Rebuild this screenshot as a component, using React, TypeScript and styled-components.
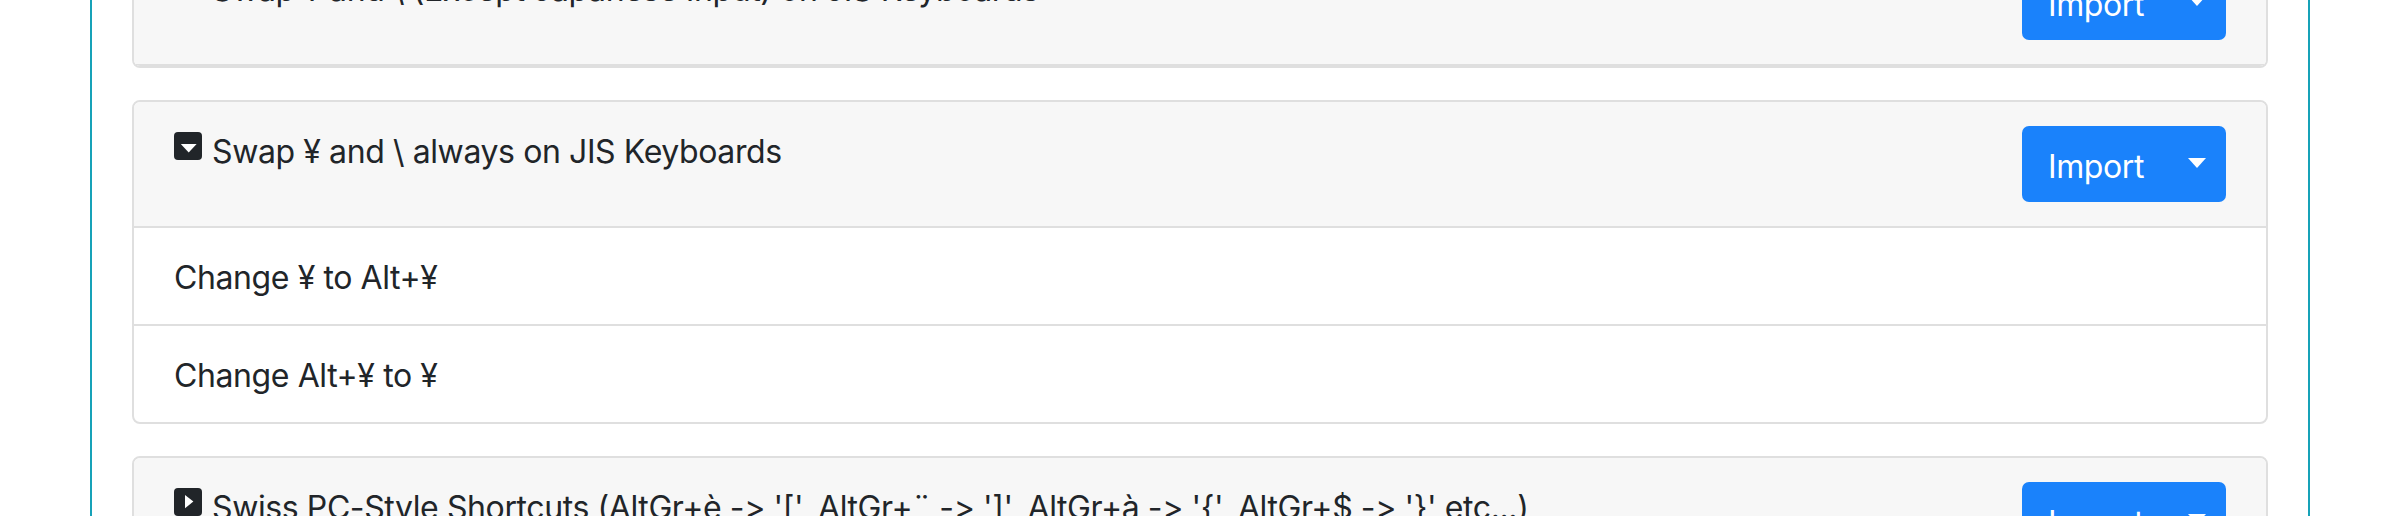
import React from 'react';
import styled, { createGlobalStyle } from 'styled-components';

interface Rule {
  title: string;
  expanded: boolean;
  items: string[];
}

const rules: Rule[] = [
  {
    title: 'Swap ¥ and \\ (Except Japanese Input) on JIS Keyboards',
    expanded: false,
    items: [],
  },
  {
    title: 'Swap ¥ and \\ always on JIS Keyboards',
    expanded: true,
    items: ['Change ¥ to Alt+¥', 'Change Alt+¥ to ¥'],
  },
  {
    title:
      "Swiss PC-Style Shortcuts (AltGr+è -> '[', AltGr+¨ -> ']', AltGr+à -> '{', AltGr+$ -> '}' etc...)",
    expanded: false,
    items: [],
  },
];

const GlobalStyle = createGlobalStyle`
  body {
    margin: 0;
    background: #fff;
    color: #212529;
    font-family: Inter, "Liberation Sans", sans-serif;
    overflow: hidden;
  }
`;

const Page = styled.div`
  padding: 0 80px 0 90px;
`;

// page is scrolled: the first card is cut off at the top
const Container = styled.div`
  margin-top: -62px;
  padding: 0 40px;
  border-left: 2px solid #17a2b8;
  border-right: 2px solid #17a2b8;
`;

const Card = styled.div`
  margin-bottom: 32px;
  background: #fff;
  border: 2px solid #dfdfdf;
  border-radius: 8px;
  overflow: hidden;
`;

const CardHeader = styled.div`
  display: flex;
  justify-content: space-between;
  align-items: flex-start;
  padding: 24px 40px;
  background: #f7f7f7;
  border-bottom: 2px solid #dfdfdf;
`;

const Title = styled.div`
  display: flex;
  align-items: flex-start;
  gap: 10px;
  font-size: 32px;
  line-height: 48px;
  letter-spacing: -0.4px;
`;

const TitleText = styled.span`
  padding-top: 2px;
`;

const ToggleIcon = styled.svg`
  flex-shrink: 0;
  width: 28px;
  height: 28px;
  margin-top: 6px;
`;

const ImportButton = styled.button`
  flex-shrink: 0;
  display: flex;
  align-items: center;
  justify-content: space-between;
  width: 204px;
  height: 76px;
  padding: 4px 20px 0 26px;
  border: none;
  border-radius: 7px;
  background: #1a82fb;
  color: #fff;
  font-family: inherit;
  font-size: 32px;
  letter-spacing: -0.4px;
`;

const Caret = styled.span`
  width: 0;
  height: 0;
  margin-top: -6px;
  border-top: 10px solid #fff;
  border-left: 9.6px solid transparent;
  border-right: 9.6px solid transparent;
`;

const Item = styled.div`
  padding: 26px 40px 22px;
  font-size: 32px;
  line-height: 48px;
  letter-spacing: -0.4px;

  & + & {
    border-top: 2px solid #dfdfdf;
  }
`;

const Toggle: React.FC<{ expanded: boolean }> = ({ expanded }) => (
  <ToggleIcon viewBox="0 0 28 28">
    <rect width="28" height="28" rx="4" fill="#212529" />
    {expanded ? (
      <path d="M6.8 12 L22.6 12 L14.7 20.4 Z" fill="#fff" strokeLinejoin="round" />
    ) : (
      <path d="M11 7 L19.4 13.6 L11 20.2 Z" fill="#fff" strokeLinejoin="round" />
    )}
  </ToggleIcon>
);

const App: React.FC = () => {
  return (
    <Page>
      <GlobalStyle />
      <Container>
        {rules.map((rule) => (
          <Card key={rule.title}>
            <CardHeader>
              <Title>
                <Toggle expanded={rule.expanded} />
                <TitleText>{rule.title}</TitleText>
              </Title>
              <ImportButton>
                Import
                <Caret />
              </ImportButton>
            </CardHeader>
            {rule.items.map((item) => (
              <Item key={item}>{item}</Item>
            ))}
          </Card>
        ))}
      </Container>
    </Page>
  );
};

export default App;
